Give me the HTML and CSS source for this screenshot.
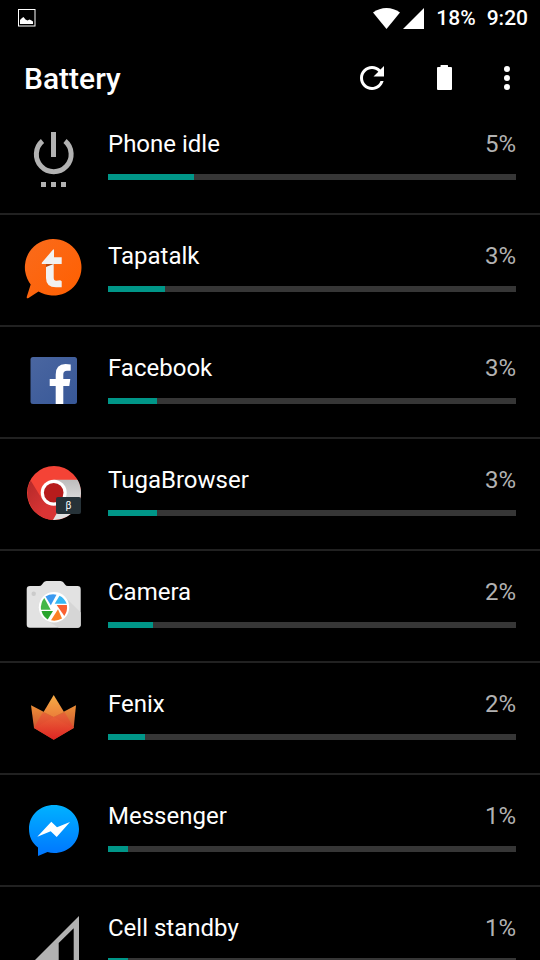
FILE: index.html
```html
<!DOCTYPE html>
<html lang="en">
<head>
<meta charset="UTF-8" />
<meta name="viewport" content="width=device-width, initial-scale=1" />
<title>Battery</title>
<link rel="stylesheet" href="styles.css">
</head>
<body>
  <div class="status-bar">
    <svg class="notification" width="18" height="18" viewBox="0 0 18 18" aria-hidden="true">
      <rect x="0.5" y="0.5" width="16.5" height="16.5" fill="none" stroke="#fff"/>
      <path d="M2 15v-4l2-2 1.500-1 2 2.500 2 1 2-1 2 1 1.500 1v2.500z" fill="#fff"/>
    </svg>
    <svg class="wifi" width="27" height="21" viewBox="0 0 27 21" aria-hidden="true">
      <path d="M0 4.500C8 -1.500 19 -1.500 27 4.500L13.500 21z" fill="#fff"/>
    </svg>
    <svg class="signal" width="21" height="21" viewBox="0 0 21 21" aria-hidden="true">
      <path d="M0 21L21 0v21z" fill="#fff"/>
    </svg>
    <span class="level">18%</span>
    <span class="clock">9:20</span>
  </div>

  <header>
    <h1>Battery</h1>
    <button type="button" aria-label="Refresh">
      <svg width="36" height="36" viewBox="0 0 24 24" fill="#fff"><path d="M17.650 6.350C16.200 4.900 14.210 4 12 4c-4.420 0-7.990 3.580-7.990 8s3.570 8 7.990 8c3.730 0 6.840-2.550 7.730-6h-2.080c-.82 2.330-3.040 4-5.650 4-3.310 0-6-2.690-6-6s2.690-6 6-6c1.660 0 3.140.69 4.220 1.780L13 11h7V4z"/></svg>
    </button>
    <button type="button" aria-label="Battery saver">
      <svg width="36" height="36" viewBox="0 0 36 36" fill="#fff"><path d="M11 8q0-1 1-1h2.500V5.500q0-.5.5-.5h6.500q.5 0 .5.500V7h3q1 0 1 1v21q0 1-1 1H12q-1 0-1-1z"/></svg>
    </button>
    <button type="button" class="overflow" aria-label="More options">
      <svg width="36" height="36" viewBox="0 0 36 36" fill="#fff"><circle cx="18" cy="9" r="3"/><circle cx="18" cy="18" r="3"/><circle cx="18" cy="27" r="3"/></svg>
    </button>
  </header>

  <ul class="usage-list">
    <li>
      <svg class="icon" viewBox="0 0 60 60" aria-hidden="true">
        <path d="M18.500 14A17.400 17.400 0 1 0 41 14" fill="none" stroke="#b2b2b2" stroke-width="5"/>
        <path d="M27 5h5v25h-5zM17 55h5v5h-5zM27 55h5v5h-5zM37 55h5v5h-5z" fill="#b2b2b2"/>
      </svg>
      <div class="info">
        <div class="line"><span class="name">Phone idle</span><span class="percent">5%</span></div>
        <div class="bar"><div class="fill" style="width: 21%"></div></div>
      </div>
    </li>
    <li>
      <svg class="icon" viewBox="0 0 60 60" aria-hidden="true">
        <linearGradient id="orange" x2="1" y2="1"><stop stop-color="#fa6b1c"/><stop offset="1" stop-color="#ff5f00"/></linearGradient>
        <path d="M6.700 45.500A28.300 28.300 0 1 1 14.500 52.500L4.500 59q-2.500 1-1.500-2z" fill="url(#orange)"/>
        <path d="M22 25h8v2l-8 2z" fill="#b94a0c"/>
        <path d="M29.300 10.300q.7 0 .7 1v7h7.700V25H29.700v13.500q0 3.200 2.500 3.200 2 0 4-.4l1.500 1v6H32Q22 48.300 22 39V28l7.500-3H18q-.7-.6 0-1.500z" fill="#f1f1f1"/>
      </svg>
      <div class="info">
        <div class="line"><span class="name">Tapatalk</span><span class="percent">3%</span></div>
        <div class="bar"><div class="fill" style="width: 14%"></div></div>
      </div>
    </li>
    <li>
      <svg class="icon" viewBox="0 0 60 60" aria-hidden="true">
        <linearGradient id="fb" x2="1" y2="1"><stop stop-color="#4a66a0"/><stop offset="1" stop-color="#385898"/></linearGradient>
        <rect x="6.500" y="6" width="46.500" height="47" rx="2.500" fill="url(#fb)"/>
        <path d="M31.700 53V35h-6v-7h6v-4.500Q31.700 13 41.500 13q3 0 5.200.4v6.300H43q-3.700 0-3.700 3.600V28h7l-1 7h-6v18z" fill="#fff"/>
      </svg>
      <div class="info">
        <div class="line"><span class="name">Facebook</span><span class="percent">3%</span></div>
        <div class="bar"><div class="fill" style="width: 12%"></div></div>
      </div>
    </li>
    <li>
      <svg class="icon" viewBox="0 0 60 60" aria-hidden="true">
        <linearGradient id="grey" x2="0" y2="1"><stop stop-color="#bdbdbd"/><stop offset=".6" stop-color="#e0e0e0"/></linearGradient>
        <linearGradient id="darkred" x2="1" y2="1"><stop stop-color="#b32929"/><stop offset=".6" stop-color="#d93434"/></linearGradient>
        <circle cx="30" cy="30" r="27" fill="#f44336"/>
        <path d="M6.700 17.500A27 27 0 0 0 29 57L41 36H18z" fill="url(#darkred)"/>
        <path d="M29.700 16.700h23.800A27 27 0 0 1 29 57L41 36z" fill="url(#grey)"/>
        <circle cx="29.700" cy="29.700" r="13" fill="#fff"/>
        <circle cx="29.700" cy="29.700" r="9.800" fill="#b71c1c"/>
        <rect x="32" y="34" width="25" height="17" rx="2" fill="#263238"/>
        <text class="badge" x="44.500" y="46" text-anchor="middle">β</text>
      </svg>
      <div class="info">
        <div class="line"><span class="name">TugaBrowser</span><span class="percent">3%</span></div>
        <div class="bar"><div class="fill" style="width: 12%"></div></div>
      </div>
    </li>
    <li>
      <svg class="icon" viewBox="0 0 60 60" aria-hidden="true">
        <path d="M6 11h9q2 0 3-1.500l1.500-2Q20.500 6 22.500 6h14q2 0 3 1.500l1.500 2Q42 11 44 11h9.500q3.200 0 3.200 3.200v35.300q0 3.200-3.200 3.200H6q-3.300 0-3.300-3.200V14.200Q2.700 11 6 11z" fill="#e2e2e2"/>
        <path d="M41 22l15.700 15.500v12q0 3.200-3.200 3.200H35L20 44z" fill="#d6d6d6"/>
        <circle cx="9.700" cy="18.700" r="2.200" fill="#cbcbcb"/>
        <circle cx="30" cy="32.300" r="15.200" fill="#fff"/>
        <path d="M21.500 21.500Q26.500 18.500 32.500 19.700L26.800 30.300z" fill="#3b9af0"/>
        <path d="M35.500 20.700Q40.500 23 42.700 28.800H30.700z" fill="#36b7f3"/>
        <path d="M32.700 30h10.200Q43.800 36 40.300 41z" fill="#fa6031"/>
        <path d="M34 34.300l4 9.200Q33 46.500 27 45.300z" fill="#fb8024"/>
        <path d="M17.500 36H29l-5.300 8.500Q19 41.500 17.500 36z" fill="#28a52d"/>
        <path d="M20.300 23L26.700 34.800H17Q16.300 28 20.300 23z" fill="#43b749"/>
      </svg>
      <div class="info">
        <div class="line"><span class="name">Camera</span><span class="percent">2%</span></div>
        <div class="bar"><div class="fill" style="width: 11%"></div></div>
      </div>
    </li>
    <li>
      <svg class="icon" viewBox="0 0 60 60" aria-hidden="true">
        <linearGradient id="flame" x2="0" y2="1"><stop stop-color="#f5ac45"/><stop offset="1" stop-color="#e2502e"/></linearGradient>
        <linearGradient id="wing" x2="0" y2="1"><stop stop-color="#ec9038"/><stop offset="1" stop-color="#cf5730"/></linearGradient>
        <linearGradient id="base" x2="0" y2="1"><stop stop-color="#e9643a"/><stop offset="1" stop-color="#de1a20"/></linearGradient>
        <path d="M29.700 8L49.700 41 29.700 52.700 10 41z" fill="url(#flame)"/>
        <path d="M7 18.300L29.700 30 10 41z" fill="url(#wing)"/>
        <path d="M52 18.300L29.700 30l20 11z" fill="url(#wing)"/>
        <path d="M19.700 25l10 5L10 41z" fill="#d86a32"/>
        <path d="M40 25l-10.300 5 20 11z" fill="#d86a32"/>
        <path d="M18.500 25.500L29.700 30 41 25.500 49.700 41l-20 11.700L10 41z" fill="url(#base)" opacity=".8"/>
      </svg>
      <div class="info">
        <div class="line"><span class="name">Fenix</span><span class="percent">2%</span></div>
        <div class="bar"><div class="fill" style="width: 9%"></div></div>
      </div>
    </li>
    <li>
      <svg class="icon" viewBox="0 0 60 60" aria-hidden="true">
        <linearGradient id="blue" x2="0" y2="1"><stop stop-color="#00b2ff"/><stop offset="1" stop-color="#0075ff"/></linearGradient>
        <path d="M14 48.500C8 44 5 37.500 5 30 5 16 16 6 30 6s25 10 25 24-11 24-25 24q-3.500 0-6.500-1L14 57z" fill="url(#blue)"/>
        <path d="M13.300 37.700l14-15 5.700 5.600L46 23 32.700 38l-6-5.700z" fill="#fff"/>
      </svg>
      <div class="info">
        <div class="line"><span class="name">Messenger</span><span class="percent">1%</span></div>
        <div class="bar"><div class="fill" style="width: 5%"></div></div>
      </div>
    </li>
    <li>
      <svg class="icon" viewBox="0 0 60 60" aria-hidden="true">
        <path d="M55 5v50H5zM49.700 17.300L34.700 32v18h15z" fill="#b2b2b2" fill-rule="evenodd"/>
      </svg>
      <div class="info">
        <div class="line"><span class="name">Cell standby</span><span class="percent">1%</span></div>
        <div class="bar"><div class="fill" style="width: 5%"></div></div>
      </div>
    </li>
  </ul>
</body>
</html>
```

FILE: styles.css
```css
* {
  box-sizing: border-box;
}
body {
  margin: 0;
  height: 100vh;
  display: flex;
  flex-direction: column;
  overflow: hidden;
  background: #000;
  color: #fff;
  font-family: Roboto, "Liberation Sans", sans-serif;
}
svg {
  display: block;
}

/* Status bar */
.status-bar {
  flex: none;
  display: flex;
  align-items: center;
  height: 36px;
  padding: 0 12px 0 18px;
  font-size: 21px;
  font-weight: 500;
}
.notification {
  margin-right: auto;
}
.signal {
  margin-left: 3px;
}
.level {
  margin-left: 12px;
}
.clock {
  margin-left: 11px;
}

/* Title and actions */
header {
  flex: none;
  display: flex;
  align-items: center;
  height: 67px;
  padding: 17px 6px 0 24px;
}
h1 {
  flex: 1;
  margin: 0;
  font-size: 30px;
  font-weight: 500;
}
header button {
  display: flex;
  justify-content: center;
  width: 72px;
  padding: 0;
  border: none;
  background: none;
  cursor: pointer;
}
header .overflow {
  width: 54px;
}

/* App list */
.usage-list {
  flex: 1;
  min-height: 0;
  margin: 0;
  padding: 0;
  list-style: none;
  overflow-y: auto;
  scrollbar-width: none;
}
.usage-list li {
  display: flex;
  gap: 24px;
  height: 112px;
  padding: 24px 24px 0;
  border-bottom: 2px solid #212121;
}
.icon {
  flex: none;
  width: 60px;
  height: 60px;
}
.info {
  flex: 1;
  padding-top: 3px;
}
.line {
  display: flex;
  justify-content: space-between;
  font-size: 24px;
  line-height: 28px;
}
.percent {
  color: #b2b2b2;
}
.bar {
  height: 6px;
  margin-top: 16px;
  background: #363636;
}
.fill {
  height: 100%;
  background: #009688;
}
.badge {
  fill: #fff;
  font-size: 10px;
}
```
